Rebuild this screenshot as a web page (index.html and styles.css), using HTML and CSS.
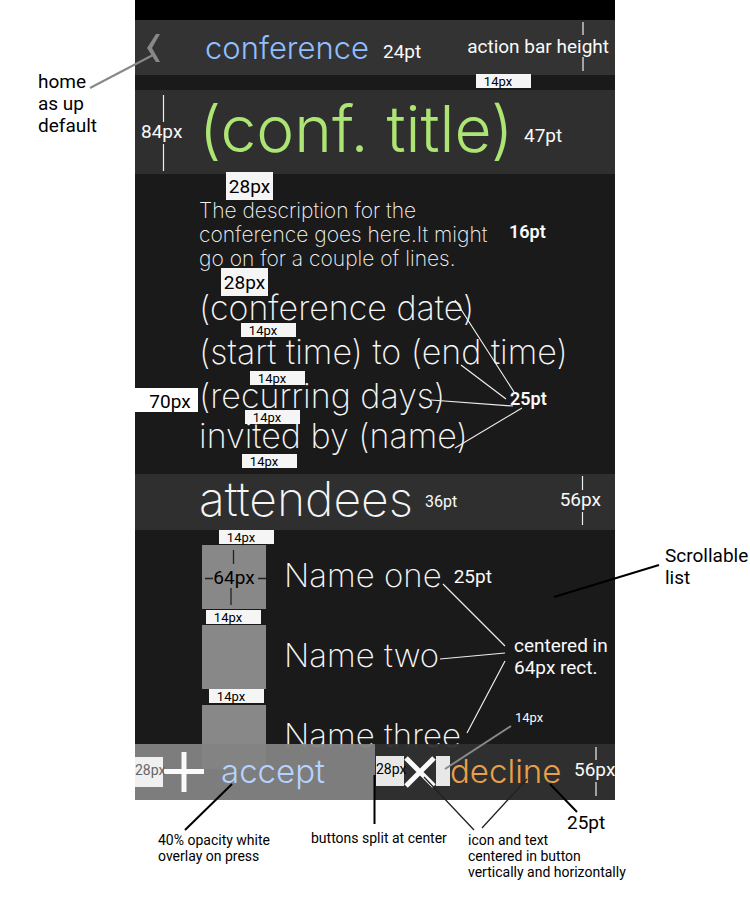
FILE: index.html
```html
<!DOCTYPE html>
<html lang="en">
<head>
<meta charset="utf-8">
<meta name="viewport" content="width=device-width, initial-scale=1">
<title>Conference details</title>
<link rel="stylesheet" href="styles.css">
</head>
<body>
<div class="board">
  <aside class="note note-home">home<br>as up<br>default</aside>

  <main class="phone">
    <div class="status"></div>
    <header class="appbar">
      <button class="up" type="button" aria-label="Up">
        <svg width="14" height="28" viewBox="0 0 14 28"><path d="M9 0h4L5 14l8 14H9L0 14z" fill="#888"/></svg>
      </button>
      <h1>conference</h1>
      <span class="note light title-size">24pt</span>
      <span class="note light bar-height">action bar height</span>
    </header>

    <section class="titlebar">
      <span class="note light title-height">84px</span>
      <h2>(conf. title)</h2>
      <span class="note light title-size">47pt</span>
    </section>

    <section class="details">
      <p class="description">The description for the<br>conference goes here.It might<br>go on for a couple of lines.</p>
      <p class="row">(conference date)</p>
      <p class="row">(start time) to (end time)</p>
      <p class="row">(recurring days)</p>
      <p class="row last">invited by (name)</p>
    </section>

    <section class="heading">
      <h3>attendees</h3>
      <span class="note light medium">36pt</span>
      <span class="note light heading-height">56px</span>
    </section>

    <ul class="people">
      <li><span class="avatar note">64px</span><span class="name">Name one</span><span class="note light">25pt</span></li>
      <li><span class="avatar"></span><span class="name">Name two</span></li>
      <li><span class="avatar"></span><span class="name">Name three</span></li>
    </ul>

    <div class="actions">
      <button class="action accept" type="button">
        <svg width="40" height="40" viewBox="0 0 40 40"><path d="M20 0v40M0 19.500h40" stroke="#fafafa" stroke-width="5"/></svg>
        <span>accept</span>
      </button>
      <button class="action decline" type="button">
        <svg width="32" height="32" viewBox="0 0 32 32"><path d="M2 2l28 28M30 2L2 30" stroke="#fafafa" stroke-width="5"/></svg>
        <span>decline</span>
      </button>
    </div>

    <div class="marks">
      <span class="tag small t1">14px</span>
      <span class="tag large t2">28px</span>
      <span class="tag large t3">28px</span>
      <span class="tag small t4">14px</span>
      <span class="tag small t5">14px</span>
      <span class="tag small t6">14px</span>
      <span class="tag small t7">14px</span>
      <span class="tag wide t8">70px</span>
      <span class="tag small t9">14px</span>
      <span class="tag small t10">14px</span>
      <span class="tag small t11">14px</span>
      <span class="tag inset dim t12">28px</span>
      <span class="tag inset t13">28px</span>
      <span class="tag gap t14"></span>
      <span class="note light bold m1">16pt</span>
      <span class="note light bold m2">25pt</span>
      <span class="note light m3">centered in<br>64px rect.</span>
      <span class="note light tiny m4">14px</span>
      <span class="note light m5">56px</span>
      <svg class="lines" width="480" height="900" viewBox="135 0 480 900" fill="none">
        <g stroke="#888" stroke-width="2"><path d="M90 88L153 55"/><path d="M445 769L511 726"/></g>
        <g stroke="#eee" stroke-width="1.200">
          <path d="M163.500 95v27M163.500 144v27M583 22v13M583 57v14M582.500 476v14M582.500 512v13M596 747v13M596 782v14"/>
          <path d="M455 300L514 392M461 365L506 399M431 400L513 406M455 448L522 408"/>
          <path d="M443 584L505 646M440 659L505 653M467 733L505 661"/>
        </g>
        <g stroke="#222" stroke-width="1.300"><path d="M233.500 550v14M231 588v17M205 578.500h8M258 578.500h8"/><path d="M424 777L474 830M527 779L482 828"/></g>
        <g stroke="#000" stroke-width="2"><path d="M554 597L659 565M185 830L232 784M374.500 775v49M550 784L577 812"/></g>
      </svg>
    </div>
  </main>

  <aside class="note note-scroll">Scrollable<br>list</aside>

  <footer class="notes">
    <p class="note-press">40% opacity white<br>overlay on press</p>
    <p class="note-split">buttons split at center</p>
    <p class="note-center">icon and text<br>centered in button<br>vertically and horizontally</p>
    <p class="note note-size">25pt</p>
  </footer>
</div>
</body>
</html>
```
FILE: styles.css
```css
* { box-sizing: border-box; }

body {
  margin: 0;
  background: #fff;
  color: #000;
  font-family: Roboto, "Liberation Sans", sans-serif;
}

h1, h2, h3, p, ul { margin: 0; padding: 0; font-weight: 250; }
button { border: 0; padding: 0; background: none; }
svg { display: block; }

.board {
  display: grid;
  grid-template-columns: 18% 64% 18%;
}

.note { font-size: 19px; line-height: 22px; white-space: nowrap; }
.light { color: #fafafa; }
.bold { font-size: 18px; font-weight: 600; }
.medium { font-size: 16px; }
.tiny { font-size: 13px; }

.note-home { padding: 71px 0 0 38px; }
.note-scroll { padding: 545px 0 0 50px; }

.phone {
  position: relative;
  background: #1a1a1a;
  color: #f5f5f5;
  font-family: Inter, "Liberation Sans", sans-serif;
  font-weight: 250;
}
.phone .note, .tag { font-family: Roboto, "Liberation Sans", sans-serif; }
.phone .note:not(.bold) { font-weight: 400; }

.status { height: 20px; background: #000; }

.appbar {
  display: flex;
  align-items: center;
  height: 55px;
  padding: 0 6px 0 12px;
  background: #333;
}
.up { width: 58px; }
h1 { color: #8fbfff; font-size: 31px; font-weight: 300; margin-right: 14px; }
.bar-height { margin-left: auto; padding-bottom: 2px; }

.titlebar {
  display: flex;
  align-items: center;
  height: 84px;
  margin-top: 15px;
  background: #2f2f2f;
}
.title-height { width: 64px; padding-left: 6px; }
h2 {
  min-width: 325px;
  color: #ade574;
  font-size: 64px;
  font-weight: 300;
  line-height: 72px;
  padding-bottom: 6px;
  white-space: nowrap;
}
.title-size { padding-top: 8px; }

.details { padding: 25px 0 20px 64px; }
.description { font-size: 21px; line-height: 24px; margin-bottom: 15px; }
.row { font-size: 34px; line-height: 44px; white-space: nowrap; }
.row.last { line-height: 36px; }

.heading {
  display: flex;
  align-items: center;
  height: 56px;
  padding: 0 14px 0 64px;
  background: #2f2f2f;
}
h3 { font-size: 48px; line-height: 48px; padding-bottom: 6px; margin-right: 12px; }
.heading-height { margin-left: auto; padding-bottom: 4px; }

.people {
  display: grid;
  gap: 16px;
  padding: 15px 0 0 67px;
  margin-bottom: -25px;
  list-style: none;
}
.people li { display: flex; align-items: center; }
.avatar {
  width: 64px;
  height: 64px;
  margin-right: 18px;
  background: #888;
  color: #000;
  text-align: center;
}
.avatar.note { line-height: 66px; }
.name { font-size: 33px; padding-bottom: 4px; margin-right: 12px; }

.actions { position: relative; display: flex; height: 56px; }
.action {
  flex: 1;
  display: flex;
  align-items: center;
  font-family: inherit;
  font-size: 33px;
  font-weight: 300;
}
.action span { padding-bottom: 2px; }
.accept { padding-left: 29px; gap: 17px; color: #b5d3ff; background: rgba(131, 131, 131, .95); }
.decline { padding-left: 29px; gap: 14px; color: #e9a04a; background: rgba(48, 48, 48, .95); }

.marks { position: absolute; inset: 0; pointer-events: none; }
.marks > * { position: absolute; }
.lines { left: 0; top: 0; overflow: visible; }

.tag { background: #f5f5f5; color: #000; font-weight: 400; text-align: center; white-space: nowrap; }
.small { width: 55px; height: 14px; padding-right: 11px; font-size: 13px; line-height: 15px; }
.large { width: 47px; height: 28px; font-size: 19px; line-height: 30px; }
.wide { width: 63px; height: 24px; padding-left: 7px; font-size: 19px; line-height: 28px; background: #fff; }
.inset { width: 28px; height: 30px; font-size: 14px; line-height: 27px; background: #e8e8e8; }
.dim { color: #666; background: #f0f0f0; }
.gap { width: 14px; height: 30px; background: #e8e8e8; }

.t1 { left: 341px; top: 74px; }
.t2 { left: 91px; top: 172px; }
.t3 { left: 86px; top: 268px; }
.t4 { left: 106px; top: 323px; }
.t5 { left: 115px; top: 371px; }
.t6 { left: 110px; top: 410px; }
.t7 { left: 107px; top: 454px; }
.t8 { left: 0; top: 388px; }
.t9 { left: 84px; top: 530px; }
.t10 { left: 71px; top: 610px; }
.t11 { left: 74px; top: 689px; }
.t12 { left: 0; top: 757px; }
.t13 { left: 241px; top: 756px; }
.t14 { left: 301px; top: 756px; }

.m1 { left: 374px; top: 221px; }
.m2 { left: 375px; top: 388px; }
.m3 { left: 379px; top: 635px; }
.m4 { left: 380px; top: 707px; }
.m5 { left: 439px; top: 759px; }

.notes {
  grid-column: 1 / -1;
  display: grid;
  grid-template-columns: 153px 157px 99px 126px;
  padding: 12px 0 18px 158px;
  font-size: 14px;
  line-height: 16px;
  white-space: nowrap;
}
.notes p { font-weight: 400; }
.note-press, .note-center { padding-top: 20px; }
.note-split { padding-top: 18px; }
```
